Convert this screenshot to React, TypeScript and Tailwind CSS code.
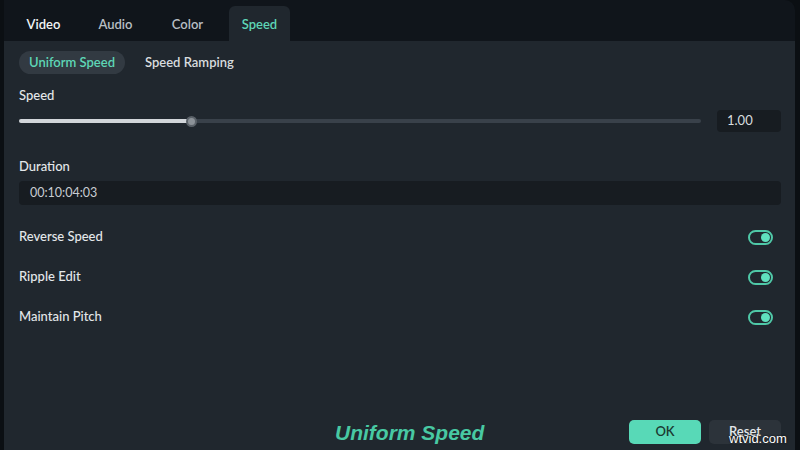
import React from "react";

const TABS = ["Video", "Audio", "Color", "Speed"];
const TOGGLES = ["Reverse Speed", "Ripple Edit", "Maintain Pitch"];

function Toggle() {
  return (
    <div className="w-[25px] h-[15px] rounded-full border-[2px] border-[#4fc9a8] flex items-center justify-end pr-[1px]">
      <div className="w-[9px] h-[9px] rounded-full bg-[#5fe0bd]" />
    </div>
  );
}

export default function App() {
  return (
    <div
      className="w-[800px] h-[450px] bg-[#0b0f13] pl-[4px] pr-[5px] flex flex-col overflow-hidden relative text-[13px]"
      style={{ fontFamily: "Lato, 'Noto Sans', sans-serif" }}
    >
      <div className="h-[41px] bg-[#10151b] rounded-tr-[10px] flex items-end pl-[9px] gap-[11px] shrink-0">
        {TABS.map((t) => (
          <div
            key={t}
            className={
              t === "Speed"
                ? "w-[61px] h-[35px] pt-[2px] rounded-t-[6px] bg-[#20272e] flex items-center justify-center text-[#5ed6b6] font-semibold"
                : "w-[61px] h-[35px] pt-[2px] flex items-center justify-center font-semibold " +
                  (t === "Video" ? "text-[#f2f4f5]" : "text-[#b8bec4]")
            }
          >
            {t}
          </div>
        ))}
      </div>

      <div className="flex-1 bg-[#20272e] pl-[15px] pr-[14px] flex flex-col">
        <div className="flex items-center gap-[20px] mt-[10px]">
          <div className="w-[106px] h-[23px] pt-[1px] rounded-full bg-[#323a42] text-[#5ed6b6] font-semibold flex items-center justify-center">
            Uniform Speed
          </div>
          <div className="text-[#d8dcdf] font-semibold pt-[1px]">Speed Ramping</div>
        </div>

        <div className="mt-[11px] text-[#e4e7ea] font-medium leading-[20px]">Speed</div>
        <div className="mt-[5px] flex items-center gap-[16px]">
          <div className="flex-1 relative h-[22px] flex items-center">
            <div className="w-full h-[4px] rounded-full bg-[#39414a] flex">
              <div className="w-[172px] h-full rounded-full bg-[#d2d6da]" />
            </div>
            <div className="absolute left-[167px] w-[11px] h-[11px] rounded-full bg-[#8c9298] border-[2px] border-[#5a6168]" />
          </div>
          <div className="w-[64px] h-[22px] rounded-[4px] bg-[#171c21] text-[#d8dcdf] pl-[10px] flex items-center">
            1.00
          </div>
        </div>

        <div className="mt-[24px] text-[#e4e7ea] font-medium leading-[20px]">Duration</div>
        <div className="mt-[5px] h-[24px] rounded-[4px] bg-[#171c21] text-[#c8cdd2] pl-[11px] flex items-center text-[12.5px]">
          00:10:04:03
        </div>

        <div className="mt-[22px] flex flex-col gap-[20px]">
          {TOGGLES.map((t) => (
            <div key={t} className="h-[20px] flex items-center justify-between pr-[8px]">
              <span className="text-[#e4e7ea] font-medium">{t}</span>
              <Toggle />
            </div>
          ))}
        </div>

        <div className="flex-1" />
        <div className="h-[28px] mb-[4px] flex items-center justify-end gap-[8px]">
          <div className="w-[72px] h-[24px] rounded-[5px] bg-[#58d9b7] text-[#1c3a32] font-semibold flex items-center justify-center">
            OK
          </div>
          <div className="w-[72px] h-[24px] rounded-[5px] bg-[#2c333a] text-[#e4e7ea] font-semibold flex items-center justify-center">
            Reset
          </div>
        </div>
      </div>

      <div
        className="absolute left-[335px] top-[417px] text-[21px] italic font-bold text-[#48c9a3]"
        style={{ fontFamily: "'Liberation Sans', 'Noto Sans', sans-serif" }}
      >
        Uniform Speed
      </div>
      <div
        className="absolute left-[729px] top-[429px] text-[13px] text-white [text-shadow:0_0_2px_#000]"
        style={{ fontFamily: "'Liberation Sans', sans-serif" }}
      >
        wtvid.com
      </div>
    </div>
  );
}
